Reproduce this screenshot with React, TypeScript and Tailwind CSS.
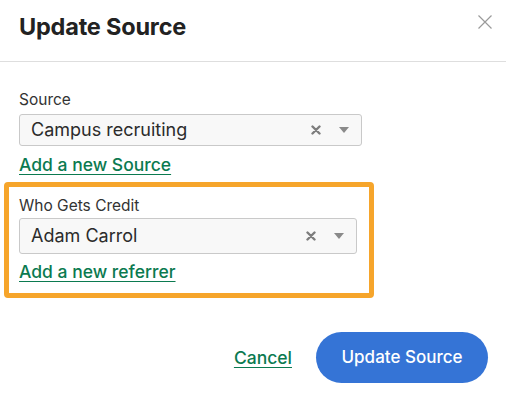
import React from 'react';

function ClearIcon() {
  return (
    <svg width="10" height="10" viewBox="0 0 10 10" className="text-[#7d7d7d]">
      <path d="M1.5 1.5 L8.5 8.5 M8.5 1.5 L1.5 8.5" stroke="currentColor" strokeWidth="2.4" strokeLinecap="round" />
    </svg>
  );
}

function Caret() {
  return (
    <svg width="10" height="6" viewBox="0 0 10 6" className="text-[#8a8a8a]">
      <path d="M0 0 H10 L5 6 Z" fill="currentColor" />
    </svg>
  );
}

interface SelectProps {
  value: string;
  className: string;
}

function FakeSelect({ value, className }: SelectProps) {
  return (
    <div className={`flex items-center border border-[#c9c9c9] rounded-[3px] bg-[#f8f8f8] pl-[11px] ${className}`}>
      <span className="flex-1 text-[18px] text-[#2b2b2b] leading-none">{value}</span>
      <ClearIcon />
      <span className="ml-[18px] mr-[12px] flex"><Caret /></span>
    </div>
  );
}

export default function App() {
  return (
    <div className="w-[506px] h-[395px] bg-white font-['Inter','Liberation_Sans',sans-serif] overflow-hidden">
      <div className="h-[62px] border-b border-[#dedede] flex items-start justify-between pl-[19px] pr-[14px]">
        <h1 className="mt-[13px] text-[23.5px] leading-[28px] font-bold text-[#222] tracking-[-0.2px]">Update Source</h1>
        <button className="mt-[15px] text-[#9a9a9a]">
          <svg width="14" height="14" viewBox="0 0 14 14">
            <path d="M0.5 0.5 L13.5 13.5 M13.5 0.5 L0.5 13.5" stroke="currentColor" strokeWidth="1.2" />
          </svg>
        </button>
      </div>

      <div className="px-[19px] pt-[28px]">
        <label className="block text-[15.5px] leading-[20px] text-[#333]">Source</label>
        <FakeSelect value="Campus recruiting" className="mt-[4px] w-[343px] h-[32px]" />
        <a href="#" className="inline-block mt-[8px] text-[17.5px] leading-[22px] font-medium text-[#0b7a50] underline underline-offset-[3px]">Add a new Source</a>
      </div>

      <div className="mx-[4px] mt-[5px] w-[370px] h-[116px] border-[5px] border-[#f6a52b] rounded-[4px] pl-[10px] pt-[9px]">
        <label className="block text-[15.5px] leading-[20px] text-[#333]">Who Gets Credit</label>
        <FakeSelect value="Adam Carrol" className="mt-[2px] w-[338px] h-[36px]" />
        <a href="#" className="inline-block mt-[7px] text-[17.5px] leading-[22px] font-medium text-[#0b7a50] underline underline-offset-[3px]">Add a new referrer</a>
      </div>

      <div className="flex items-center justify-end gap-[24px] pr-[18px] mt-[34px]">
        <a href="#" className="text-[17.5px] leading-[22px] font-medium text-[#0b7a50] underline underline-offset-[3px]">Cancel</a>
        <button className="w-[172px] h-[51px] rounded-full bg-[#3574d6] text-white text-[17px] font-medium">Update Source</button>
      </div>
    </div>
  );
}
